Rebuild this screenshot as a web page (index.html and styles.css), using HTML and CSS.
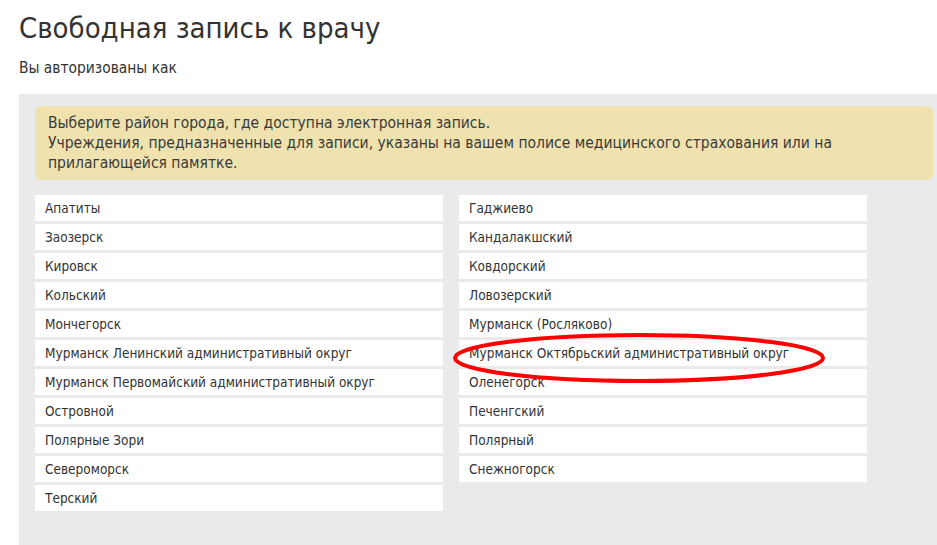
FILE: index.html
```html
<!DOCTYPE html>
<html lang="ru">
<head>
<meta charset="utf-8">
<title>Свободная запись к врачу</title>
<link rel="stylesheet" href="styles.css">
</head>
<body>
<div class="page">
  <h1 class="title">Свободная запись к врачу</h1>
  <p class="auth">Вы авторизованы как</p>
  <div class="panel">
    <div class="alert">
      Выберите район города, где доступна электронная запись.<br>
      Учреждения, предназначенные для записи, указаны на вашем полисе медицинского страхования или на прилагающейся памятке.
    </div>
    <div class="lists">
      <ul class="list">
        <li class="item">Апатиты</li>
        <li class="item">Заозерск</li>
        <li class="item">Кировск</li>
        <li class="item">Кольский</li>
        <li class="item">Мончегорск</li>
        <li class="item">Мурманск Ленинский административный округ</li>
        <li class="item">Мурманск Первомайский административный округ</li>
        <li class="item">Островной</li>
        <li class="item">Полярные Зори</li>
        <li class="item">Североморск</li>
        <li class="item">Терский</li>
      </ul>
      <ul class="list">
        <li class="item">Гаджиево</li>
        <li class="item">Кандалакшский</li>
        <li class="item">Ковдорский</li>
        <li class="item">Ловозерский</li>
        <li class="item">Мурманск (Росляково)</li>
        <li class="item marked">Мурманск Октябрьский административный округ
          <svg class="mark" width="380" height="56" viewBox="0 0 380 56"><ellipse cx="188" cy="28" rx="184" ry="23" fill="none" stroke="#ff0000" stroke-width="4"/></svg>
        </li>
        <li class="item">Оленегорск</li>
        <li class="item">Печенгский</li>
        <li class="item">Полярный</li>
        <li class="item">Снежногорск</li>
      </ul>
    </div>
  </div>
</div>
</body>
</html>
```
FILE: styles.css
```css
html, body {
  margin: 0;
  padding: 0;
  overflow: hidden;
  background: #ffffff;
}
body {
  font-family: "DejaVu Sans Condensed", "DejaVu Sans", sans-serif;
  color: #333333;
}
.page {
  padding: 0 0 0 19px;
}
.title {
  margin: 0;
  padding-top: 10px;
  font-size: 29px;
  font-weight: normal;
  line-height: 36px;
  color: #333333;
}
.auth {
  margin: 13px 0 0 0;
  font-size: 15.4px;
  line-height: 18px;
  height: 18px;
}
.panel {
  margin-top: 17px;
  width: 930px;
  height: 451px;
  background: #eaeaea;
  padding: 12px 16px;
  box-sizing: border-box;
}
.alert {
  background: #efe2ae;
  border-radius: 6px;
  padding: 7px 13px 7px 13px;
  font-size: 15.5px;
  line-height: 20px;
  color: #3a3a3a;
}
.lists {
  margin-top: 15px;
  display: grid;
  grid-template-columns: 408px 408px;
  column-gap: 16px;
  align-items: start;
}
.list {
  list-style: none;
  margin: 0;
  padding: 0;
  display: flex;
  flex-direction: column;
  gap: 3px;
}
.item {
  background: #ffffff;
  height: 26px;
  line-height: 26px;
  padding-left: 10px;
  font-size: 13.5px;
  color: #333333;
}
.marked {
  position: relative;
}
.mark {
  position: absolute;
  left: -8px;
  top: -10px;
}
```
